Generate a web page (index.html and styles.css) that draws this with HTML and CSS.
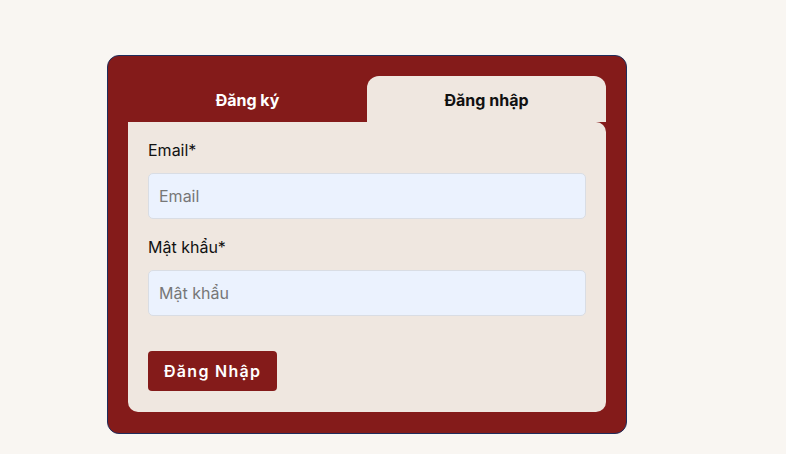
FILE: index.html
```html
<!DOCTYPE html>
<html lang="vi">
  <head>
    <meta charset="UTF-8">
    <link rel="stylesheet" href="styles.css">
  </head>
  <body>
    <main class="page">
      <div class="auth-card">
        <div class="tabs">
          <button class="tab">Đăng ký</button>
          <button class="tab active">Đăng nhập</button>
        </div>
        <form class="panel">
          <label class="field">
            <span>Email*</span>
            <input type="email" placeholder="Email" />
          </label>
          <label class="field">
            <span>Mật khẩu*</span>
            <input type="password" placeholder="Mật khẩu" />
          </label>
          <button type="button" class="btn-submit">Đăng Nhập</button>
        </form>
      </div>
    </main>
  </body>
</html>
```

FILE: styles.css
```css
html, body {
  margin: 0;
  padding: 0;
  width: 100%;
  height: 100%;
  font-family: Inter, "Noto Sans", sans-serif;
  color: #111;
  background: #f9f6f2;
  overflow: hidden;
}
* {
  box-sizing: border-box;
}
.page {
  padding: 55px 0 0 107px;
}
.auth-card {
  width: 520px;
  background: #841b1a;
  border: 1px solid #1f2d5c;
  border-radius: 12px;
  padding: 20px 20px 21px;
}
.tabs {
  display: flex;
}
.tab {
  flex: 1;
  height: 46px;
  border: none;
  background: transparent;
  font-family: inherit;
  font-size: 16px;
  font-weight: 700;
  color: #fff;
  padding: 2px 0 0;
  border-radius: 12px 12px 0 0;
}
.tab.active {
  background: #efe7e0;
  color: #111;
}
.panel {
  background: #efe7e0;
  border-radius: 0 10px 10px 10px;
  padding: 18px 20px 21px;
  display: flex;
  flex-direction: column;
  align-items: flex-start;
}
.field {
  display: flex;
  flex-direction: column;
  width: 100%;
  margin-bottom: 18px;
}
.field span {
  font-size: 16px;
  line-height: 20px;
  margin-bottom: 13px;
}
.field input {
  width: 100%;
  height: 46px;
  border: 1px solid #d9dde4;
  border-radius: 5px;
  background: #ebf2fe;
  padding: 0 10px;
  font-family: inherit;
  font-size: 16px;
  color: #333;
}
.field input::placeholder {
  color: #777;
}
.panel .field:last-of-type {
  margin-bottom: 35px;
}
.btn-submit {
  height: 40px;
  padding: 0 16px;
  border: none;
  border-radius: 4px;
  background: #841b1a;
  color: #fff;
  font-family: inherit;
  font-size: 16px;
  font-weight: 600;
  letter-spacing: 1.3px;
}
```
